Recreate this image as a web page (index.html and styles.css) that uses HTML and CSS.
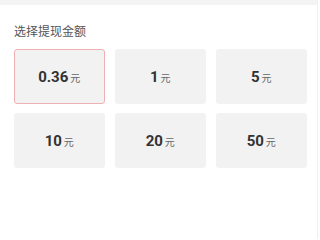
FILE: index.html
```html
<!DOCTYPE html>
<html lang="zh">
<head>
<meta charset="utf-8">
<link rel="stylesheet" href="styles.css">
</head>
<body>
<div class="page">
  <div class="topbar"></div>
  <div class="section">
    <div class="label">选择提现金额</div>
    <div class="grid">
      <div class="card selected"><span class="num">0.36</span><span class="unit">元</span></div>
      <div class="card"><span class="num">1</span><span class="unit">元</span></div>
      <div class="card"><span class="num">5</span><span class="unit">元</span></div>
      <div class="card"><span class="num">10</span><span class="unit">元</span></div>
      <div class="card"><span class="num">20</span><span class="unit">元</span></div>
      <div class="card"><span class="num">50</span><span class="unit">元</span></div>
    </div>
  </div>
</div>
</body>
</html>
```
FILE: styles.css
```css
html, body {
  margin: 0;
  padding: 0;
  background: #fff;
}
body {
  font-family: Roboto, "Noto Sans CJK SC", sans-serif;
  width: 320px;
  height: 239px;
  overflow: hidden;
}
.page {
  width: 317px;
  height: 239px;
  border-right: 1px solid #efefef;
}
.topbar {
  height: 5px;
  background: #f4f4f4;
}
.section {
  padding: 17px 0 0 14px;
}
.label {
  font-size: 12px;
  line-height: 17px;
  color: #555;
  font-family: "Noto Sans CJK SC", sans-serif;
}
.grid {
  margin-top: 10px;
  display: grid;
  grid-template-columns: repeat(3, 90.5px);
  grid-auto-rows: 55px;
  column-gap: 10.5px;
  row-gap: 9px;
}
.card {
  background: #f2f2f2;
  border-radius: 3px;
  display: flex;
  align-items: center;
  justify-content: center;
  box-sizing: border-box;
}
.card.selected {
  border: 1px solid #efb0b3;
}
.num {
  font-size: 15px;
  font-weight: 700;
  color: #333;
}
.unit {
  font-family: "Noto Sans CJK SC", sans-serif;
  font-size: 10px;
  color: #666;
  margin-left: 2px;
  margin-top: 2px;
}
```
